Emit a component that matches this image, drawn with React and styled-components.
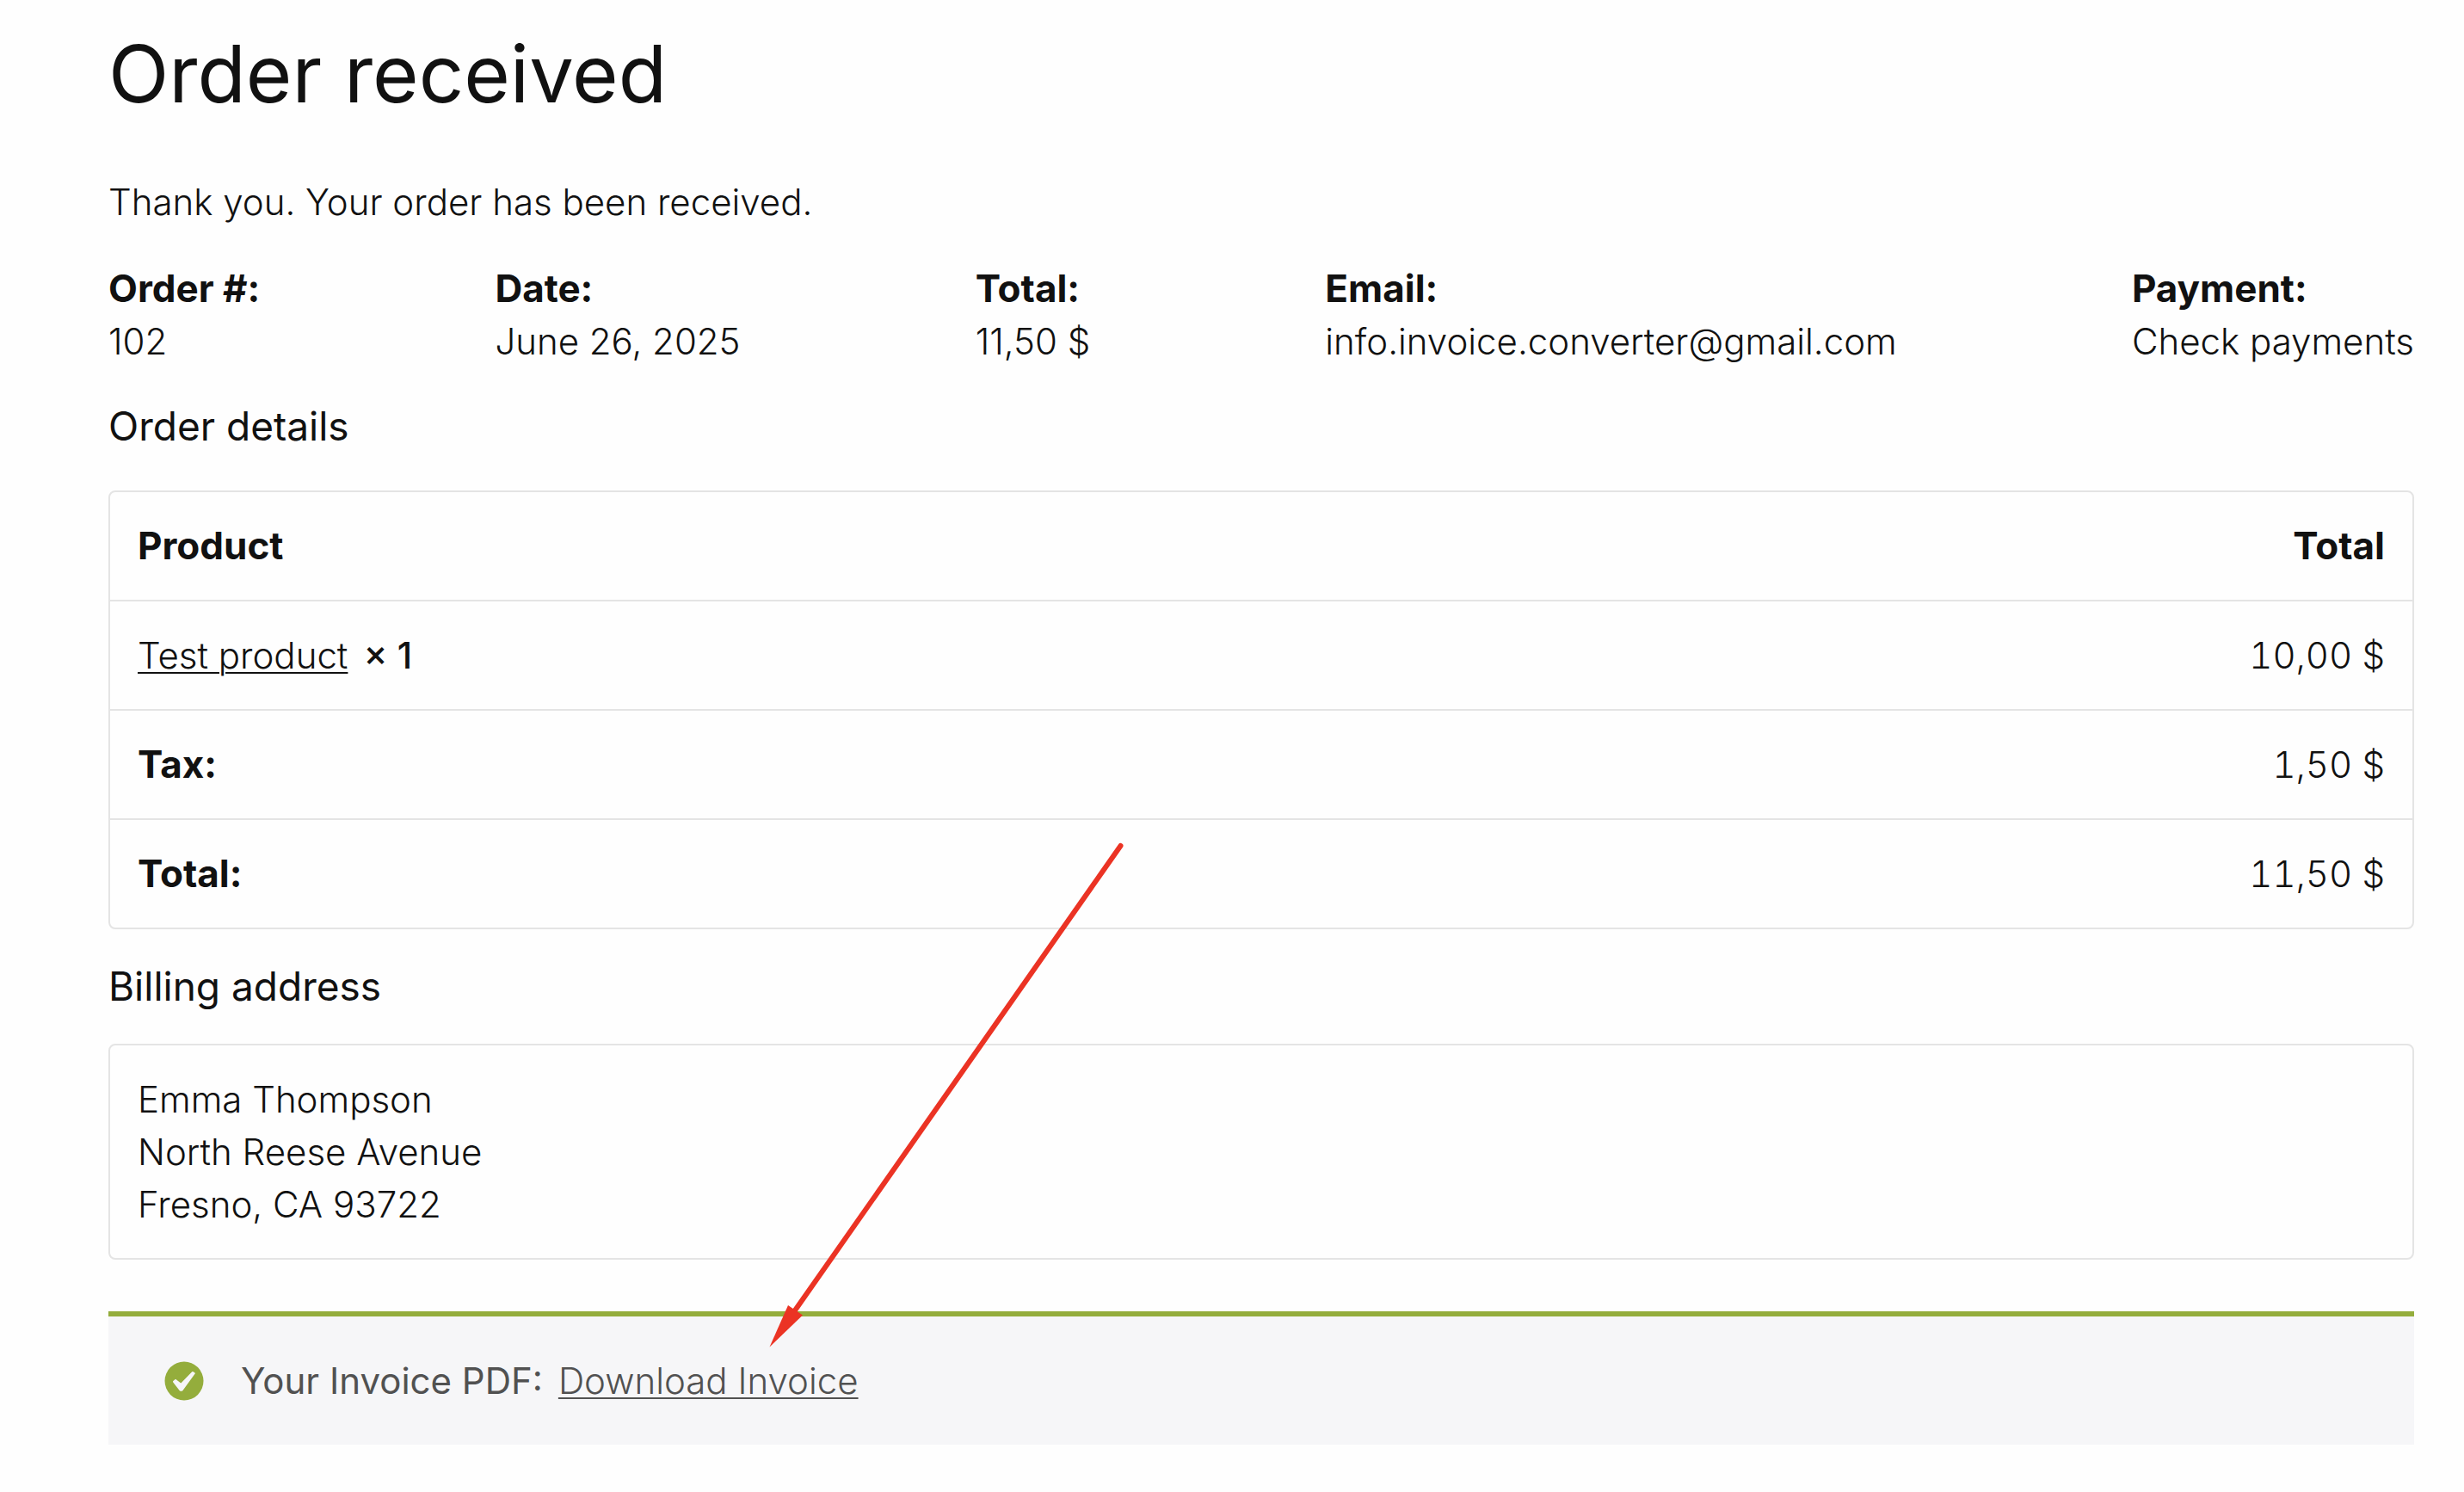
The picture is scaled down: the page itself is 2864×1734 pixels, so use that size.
import React from "react";
import styled, { createGlobalStyle } from "styled-components";

const GlobalStyle = createGlobalStyle`
  body {
    margin: 0;
    background: #fefefe;
    color: #111111;
    font-family: Inter, "Liberation Sans", sans-serif;
    font-size: 42px;
    font-weight: 300;
    line-height: 61px;
  }
`;

const Page = styled.main`
  position: relative;
  padding: 28px 58px 50px 126px;
`;

const Title = styled.h1`
  margin: 0 0 60px;
  font-size: 92px;
  font-weight: 400;
  line-height: 116px;
`;

const Notice = styled.p`
  margin: 0 0 40px;
`;

const Overview = styled.ul`
  display: flex;
  justify-content: space-between;
  margin: 0 0 38px;
  padding: 0;
  list-style: none;
`;

const OverviewItem = styled.li`
  white-space: nowrap;
`;

const OverviewLabel = styled.strong`
  display: block;
  font-size: 44px;
  font-weight: 700;
`;

const SectionTitle = styled.h2`
  margin: 0;
  font-size: 46px;
  font-weight: 400;
  line-height: 61px;
`;

const OrderTable = styled.table`
  width: 100%;
  margin: 44px 0 36px;
  border: 2px solid #e4e4e4;
  border-radius: 8px;
  border-spacing: 0;
`;

const Cell = styled.td`
  padding: 32px;
  text-align: ${(props) => (props.$end ? "right" : "left")};
  font-variant-numeric: ${(props) => (props.$end ? "tabular-nums" : "normal")};

  tbody & {
    border-top: 2px solid #e4e4e4;
  }
`;

const HeadCell = styled(Cell)`
  font-size: 44px;
  font-weight: 700;
`;

const Quantity = styled.strong`
  margin-left: 18px;
  font-weight: 500;
`;

const Address = styled.address`
  margin: 36px 0 60px;
  padding: 32px;
  border: 2px solid #e4e4e4;
  border-radius: 8px;
  font-style: normal;
`;

const InvoiceBar = styled.div`
  display: flex;
  align-items: center;
  padding: 44px 64px;
  border-top: 6px solid #94ad3c;
  background: #f6f6f8;
  color: #515151;
  font-weight: 400;
`;

const TextLink = styled.a`
  color: inherit;
  font-weight: 300;
  text-decoration-thickness: 2px;
  text-underline-offset: 4px;
`;

const CheckIcon = styled.svg`
  width: 48px;
  height: 48px;
  margin-right: 42px;
`;

const InvoiceLabel = styled.span`
  margin-right: 18px;
`;

// lies over the page and points at the download link
const Arrow = styled.svg`
  position: absolute;
  left: 890px;
  top: 976px;
  width: 420px;
  height: 594px;
  pointer-events: none;
`;

const overview = [
  { label: "Order #:", value: "102" },
  { label: "Date:", value: "June 26, 2025" },
  { label: "Total:", value: "11,50 $" },
  { label: "Email:", value: "info.invoice.converter@gmail.com" },
  { label: "Payment:", value: "Check payments" },
];

const totals = [
  { label: "Tax:", value: "1,50 $" },
  { label: "Total:", value: "11,50 $" },
];

const App = () => {
  return (
    <Page>
      <GlobalStyle />
      <Title>Order received</Title>
      <Notice>Thank you. Your order has been received.</Notice>

      <Overview>
        {overview.map((item) => (
          <OverviewItem key={item.label}>
            <OverviewLabel>{item.label}</OverviewLabel>
            {item.value}
          </OverviewItem>
        ))}
      </Overview>

      <SectionTitle>Order details</SectionTitle>
      <OrderTable>
        <thead>
          <tr>
            <HeadCell as="th" scope="col">Product</HeadCell>
            <HeadCell as="th" scope="col" $end>Total</HeadCell>
          </tr>
        </thead>
        <tbody>
          <tr>
            <Cell>
              <TextLink href="#product">Test product</TextLink>
              <Quantity>× 1</Quantity>
            </Cell>
            <Cell $end>10,00 $</Cell>
          </tr>
          {totals.map((row) => (
            <tr key={row.label}>
              <HeadCell as="th" scope="row">{row.label}</HeadCell>
              <Cell $end>{row.value}</Cell>
            </tr>
          ))}
        </tbody>
      </OrderTable>

      <SectionTitle>Billing address</SectionTitle>
      <Address>
        Emma Thompson
        <br />
        North Reese Avenue
        <br />
        Fresno, CA 93722
      </Address>

      <InvoiceBar>
        <CheckIcon viewBox="0 0 48 48" aria-hidden="true">
          <circle cx="24" cy="24" r="22.5" fill="#94ad3c" />
          <path
            d="M11 24.3L14 21.7L20.3 26.5L33.2 13.2Q34.5 12.6 37 15L22.3 35.2Q20.5 36.4 18.8 35.2L11.2 25.6Z"
            fill="#f6f6f8"
          />
        </CheckIcon>
        <InvoiceLabel>Your Invoice PDF:</InvoiceLabel>
        <TextLink href="#invoice">Download Invoice</TextLink>
      </InvoiceBar>

      <Arrow viewBox="0 0 420 594" aria-hidden="true">
        <line x1="412.5" y1="7" x2="34" y2="547" stroke="#eb3324" strokeWidth="6" strokeLinecap="round" />
        <path d="M4.5 589.5L26 541L43 552.5Z" fill="#eb3324" />
      </Arrow>
    </Page>
  );
};

export default App;
